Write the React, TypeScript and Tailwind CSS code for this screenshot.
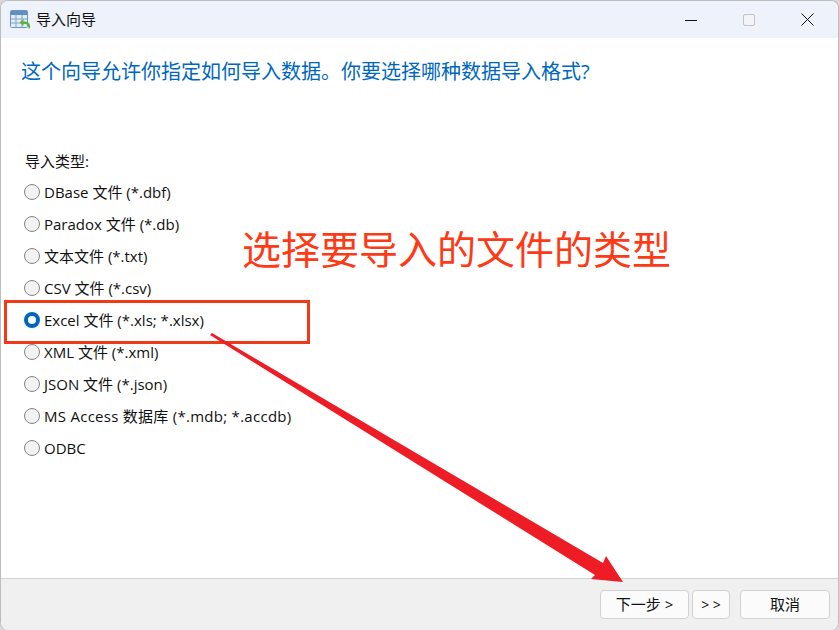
const importTypes = [
  "DBase 文件 (*.dbf)",
  "Paradox 文件 (*.db)",
  "文本文件 (*.txt)",
  "CSV 文件 (*.csv)",
  "Excel 文件 (*.xls; *.xlsx)",
  "XML 文件 (*.xml)",
  "JSON 文件 (*.json)",
  "MS Access 数据库 (*.mdb; *.accdb)",
  "ODBC",
];

const selectedType = "Excel 文件 (*.xls; *.xlsx)";

function WizardIcon() {
  return (
    <svg width="21" height="20" viewBox="0 0 21 20" className="shrink-0">
      <rect x="0.5" y="0.5" width="17" height="17" rx="1" fill="#e3ecf7" stroke="#6b94c2" />
      <rect x="1" y="1" width="16" height="4" fill="#5f8fc4" />
      <path d="M1 9h16M1 13h16M6 5v12.500M12 5v12.500" stroke="#7ea5cf" strokeWidth="1" fill="none" />
      <path d="M13.500 9 9.500 12.500l4 3.500v-2.200c2.500 0 3.800.8 4.500 2.200l.8 2.500h1.200c.5-2.800-.2-4.600-1.500-5.700-1.100-.9-2.700-1.300-5-1.300Z" fill="#5fb13c" />
    </svg>
  );
}

function Radio({ checked }: { checked: boolean }) {
  if (checked) {
    return <span className="h-4 w-4 shrink-0 rounded-full border-[4px] border-[#0067c0] bg-white" />;
  }
  return <span className="h-4 w-4 shrink-0 rounded-full border border-[#858585] bg-[#f3f3f3]" />;
}

export default function App() {
  return (
    <div className="relative h-[630px] w-[839px] overflow-hidden bg-[#d9d9d9] font-['Open_Sans','Noto_Sans_CJK_SC',sans-serif] text-[#111]">
      <div className="flex h-full flex-col overflow-hidden rounded-lg border-x border-t border-[#bdbdbd] bg-white">
        <header className="flex h-[37px] shrink-0 items-center bg-[#eef2fa] pl-[9px]">
          <WizardIcon />
          <span className="ml-[5px] text-[15px]">导入向导</span>
          <div className="ml-auto flex items-center">
            <svg width="12" height="12" viewBox="0 0 12 12">
              <path d="M0 6.500h12" stroke="#111" fill="none" />
            </svg>
            <span className="ml-[46px] h-3 w-3 rounded-[2px] border border-[#c4c4c4] bg-[#f3f4f8]" />
            <svg className="mr-[24px] ml-[46px]" width="13" height="13" viewBox="0 0 13 13">
              <path d="M.5.500l12 12M12.500.500l-12 12" stroke="#111" fill="none" />
            </svg>
          </div>
        </header>

        <main className="flex min-h-0 flex-1 flex-col px-5 pt-[19px]">
          <h1 className="text-[20px] leading-[30px] font-normal text-[#0067c0]">
            这个向导允许你指定如何导入数据。你要选择哪种数据导入格式?
          </h1>
          <p className="mt-[64px] ml-[4px] text-[15px] leading-5">导入类型:</p>
          <ul className="mt-[5px] ml-[3px] flex flex-col">
            {importTypes.map((type) => (
              <li key={type} className="flex h-8 items-center gap-[4px]">
                <Radio checked={type === selectedType} />
                <span className={type.startsWith("MS") ? "text-[15px] leading-5 tracking-[0.27px] whitespace-nowrap" : "text-[15px] leading-5 whitespace-nowrap"}>
                  {type}
                </span>
              </li>
            ))}
          </ul>
        </main>

        <footer className="flex h-[52px] shrink-0 items-start rounded-b-lg border-t border-[#d2d2d2] bg-[#f0f0f0] pt-[11px] pr-[8px]">
          <div className="ml-auto flex text-[15px]">
            <button className="h-[29px] w-[89px] rounded-[4px] border border-[#d1d1d1] bg-[#fbfbfb]">下一步 &gt;</button>
            <button className="ml-[3px] h-[29px] w-[38px] rounded-[4px] border border-[#d1d1d1] bg-[#fbfbfb] text-[14px]">&gt; &gt;</button>
            <button className="ml-[10px] h-[29px] w-[90px] rounded-[4px] border border-[#d1d1d1] bg-[#fbfbfb]">取消</button>
          </div>
        </footer>
      </div>

      {/* annotations pasted over the dialog */}
      <div className="absolute top-[221px] left-[242px] text-[39px] leading-[56px] whitespace-nowrap text-[#fe3a16]">
        选择要导入的文件的类型
      </div>
      <div className="absolute top-[300px] left-[4px] h-[44px] w-[306px] border-[3px] border-[#f03a17]" />
      <svg className="absolute top-0 left-0" width="839" height="630" viewBox="0 0 839 630">
        <path d="M212 333 L603 563 L606 556 L623 582 L591 579 L595 575 L210 335 Z" fill="#ee1c25" />
      </svg>
    </div>
  );
}
